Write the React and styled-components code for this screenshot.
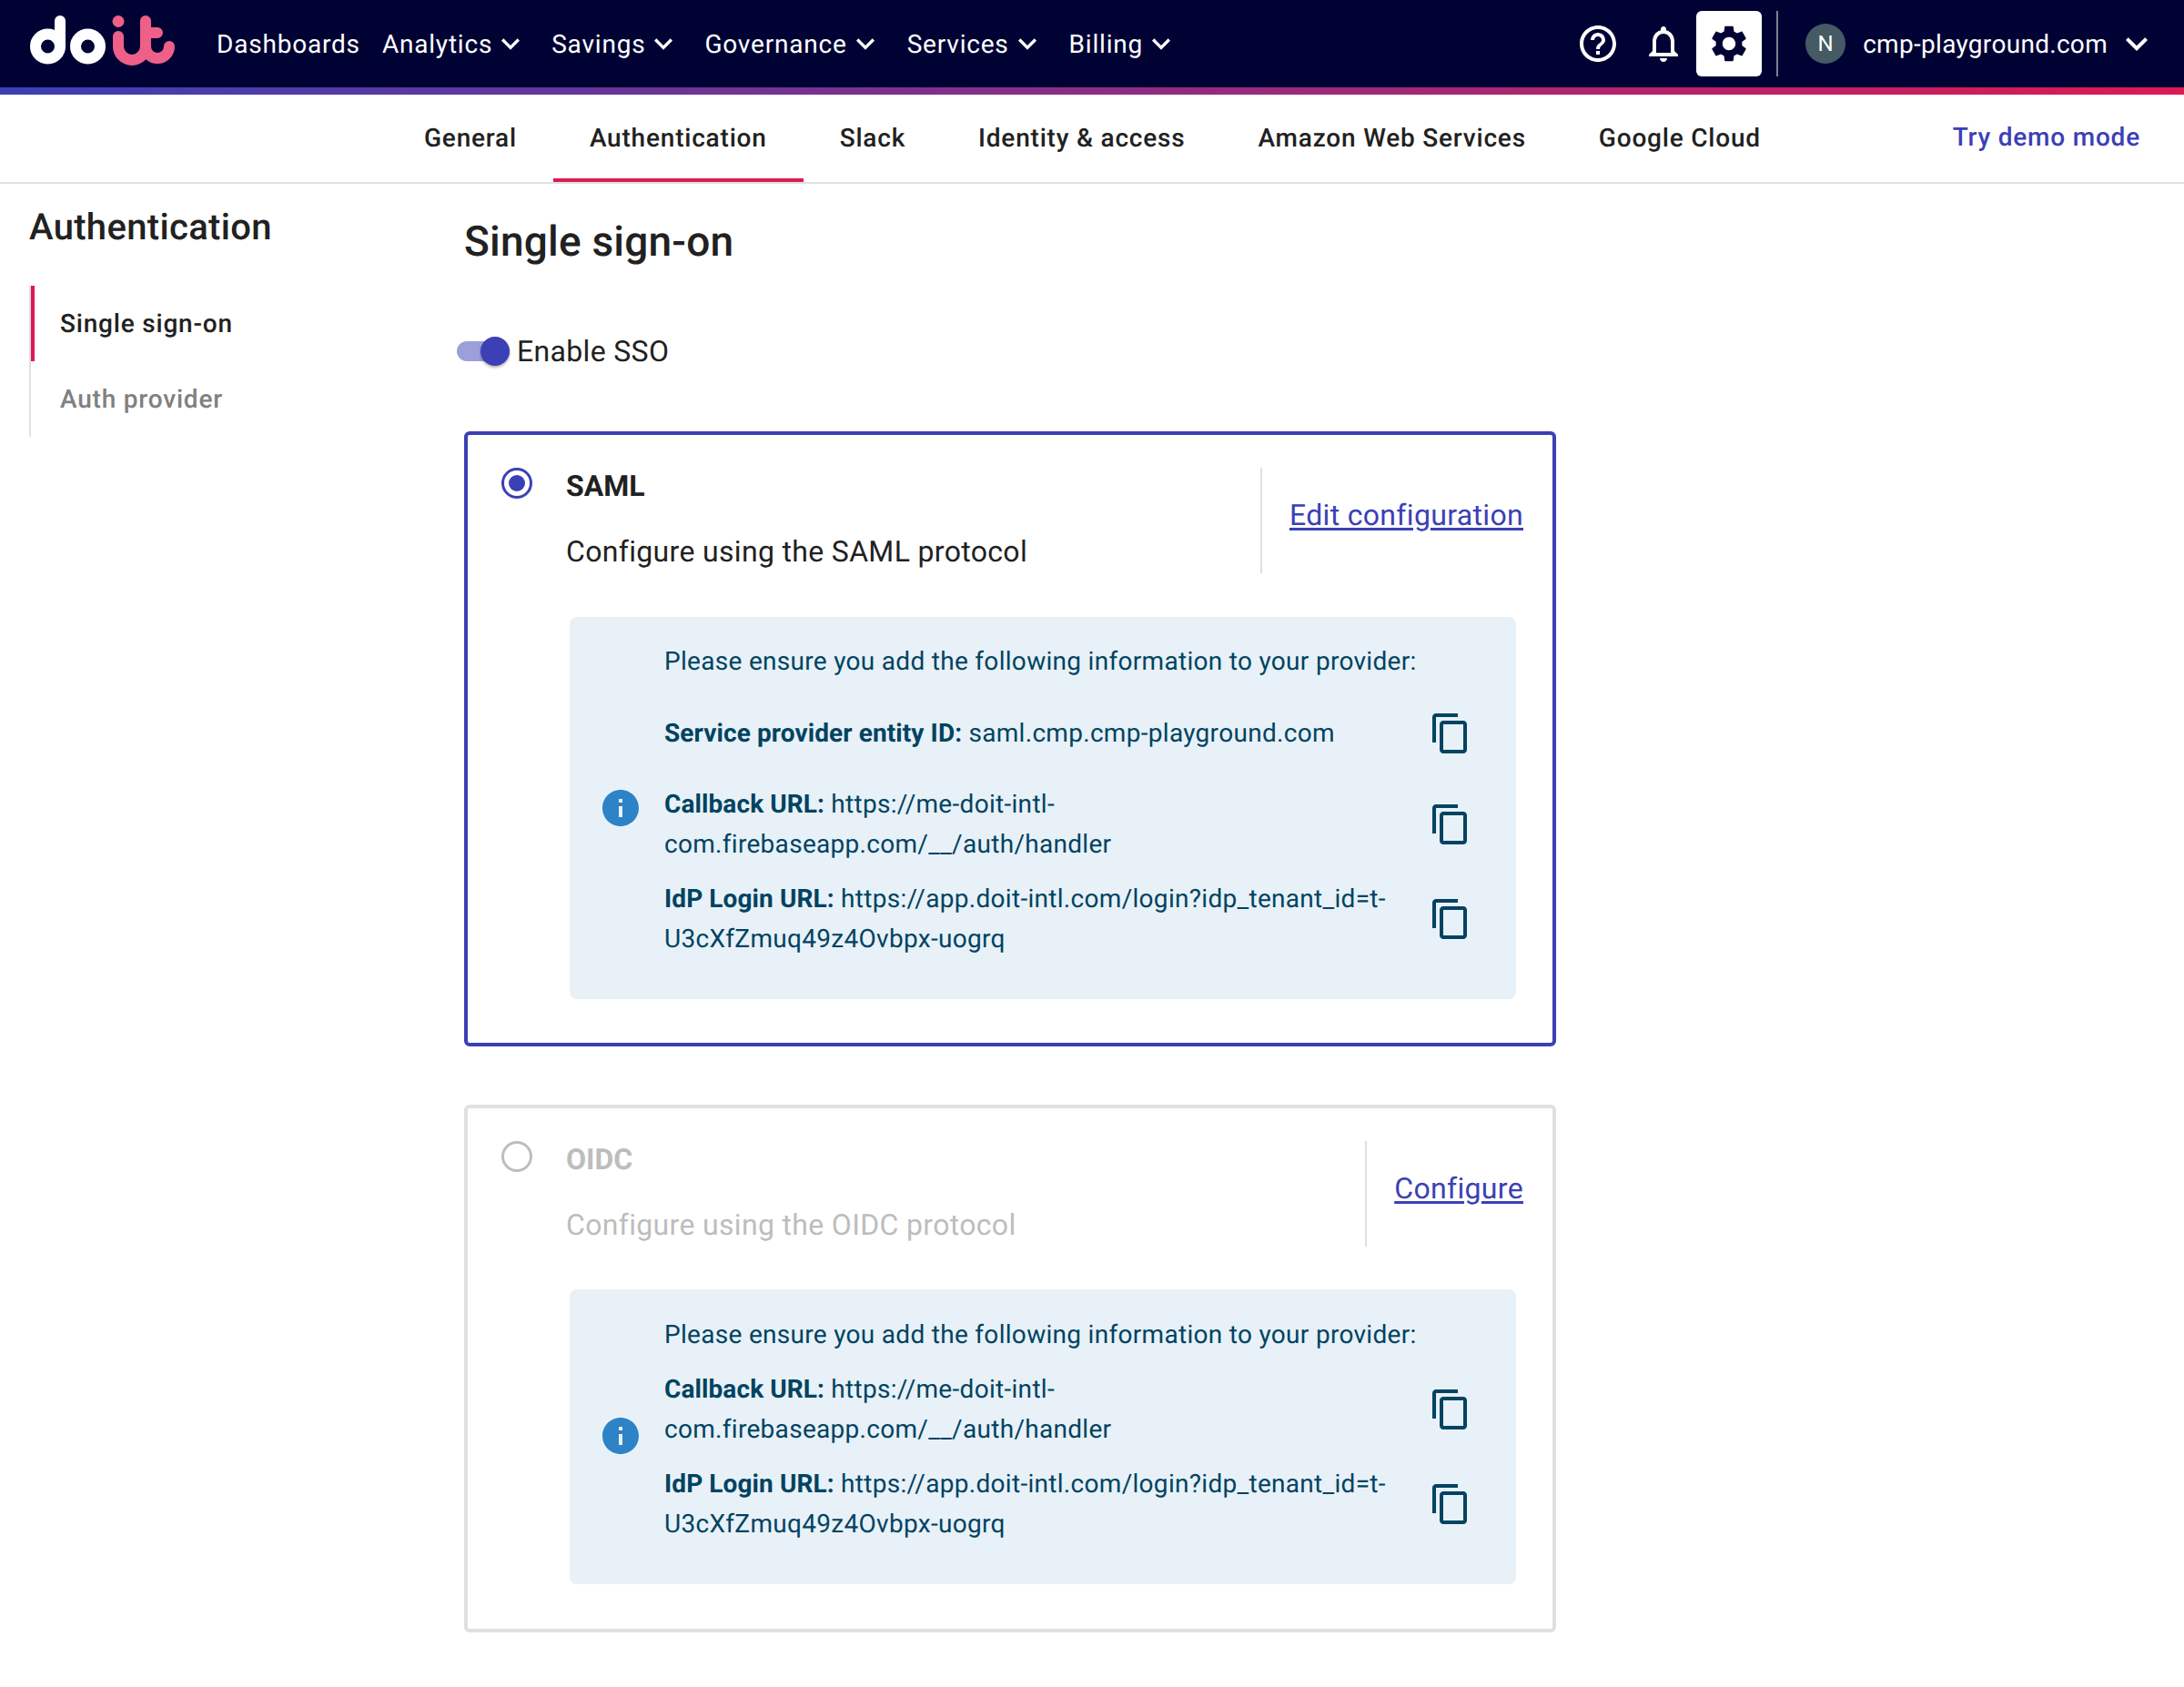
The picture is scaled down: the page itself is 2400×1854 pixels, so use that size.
import React from 'react';
import styled, { createGlobalStyle } from 'styled-components';

const PRIMARY = '#3b40b5';
const RED = '#dc1a54';
const INFO_TEXT = '#014361';

const icons = {
  help: 'M11 18h2v-2h-2v2zm1-16C6.48 2 2 6.48 2 12s4.48 10 10 10 10-4.48 10-10S17.52 2 12 2zm0 18c-4.41 0-8-3.59-8-8s3.59-8 8-8 8 3.59 8 8-3.59 8-8 8zm0-14c-2.21 0-4 1.79-4 4h2c0-1.1.9-2 2-2s2 .9 2 2c0 2-3 1.75-3 5h2c0-2.25 3-2.5 3-5 0-2.21-1.79-4-4-4z',
  bell: 'M12 22c1.1 0 2-.9 2-2h-4c0 1.1.9 2 2 2zm6-6v-5c0-3.07-1.63-5.64-4.5-6.32V4c0-.83-.67-1.5-1.5-1.5s-1.5.67-1.5 1.5v.68C7.64 5.36 6 7.92 6 11v5l-2 2v1h16v-1l-2-2zm-2 1H8v-6c0-2.48 1.51-4.5 4-4.5s4 2.02 4 4.5v6z',
  gear: 'M19.14 12.94c.04-.3.06-.61.06-.94 0-.32-.02-.64-.07-.94l2.03-1.58c.18-.14.23-.41.12-.61l-1.92-3.32c-.12-.22-.37-.29-.59-.22l-2.39.96c-.5-.38-1.03-.7-1.62-.94l-.36-2.54c-.04-.24-.24-.41-.48-.41h-3.84c-.24 0-.43.17-.47.41l-.36 2.54c-.59.24-1.13.57-1.62.94l-2.39-.96c-.22-.08-.47 0-.59.22L2.74 8.87c-.12.21-.08.47.12.61l2.03 1.58c-.05.3-.09.63-.09.94s.02.64.07.94l-2.03 1.58c-.18.14-.23.41-.12.61l1.92 3.32c.12.22.37.29.59.22l2.39-.96c.5.38 1.03.7 1.62.94l.36 2.54c.05.24.24.41.48.41h3.84c.24 0 .44-.17.47-.41l.36-2.54c.59-.24 1.13-.56 1.62-.94l2.39.96c.22.08.47 0 .59-.22l1.92-3.32c.12-.22.07-.47-.12-.61l-2.01-1.58zM12 15.6c-1.98 0-3.6-1.62-3.6-3.6s1.62-3.6 3.6-3.6 3.6 1.62 3.6 3.6-1.62 3.6-3.6 3.6z',
  chevron: 'M16.59 8.59 12 13.17 7.41 8.59 6 10l6 6 6-6z',
  copy: 'M16 1H4c-1.1 0-2 .9-2 2v14h2V3h12V1zm3 4H8c-1.1 0-2 .9-2 2v14c0 1.1.9 2 2 2h11c1.1 0 2-.9 2-2V7c0-1.1-.9-2-2-2zm0 16H8V7h11v14z',
  info: 'M12 2C6.48 2 2 6.48 2 12s4.48 10 10 10 10-4.48 10-10S17.52 2 12 2zm1 15h-2v-6h2v6zm0-8h-2V7h2v2z',
};

const Global = createGlobalStyle`
  html, body { margin: 0; padding: 0; background: #fff; }
  body {
    font-family: Roboto, "Liberation Sans", sans-serif;
    color: #212121;
    text-rendering: geometricPrecision;
  }
  * { box-sizing: border-box; }
`;

const Svg = styled.svg`
  display: block;
  flex: none;
  fill: ${({ $color }) => $color || 'currentColor'};
`;

const Icon = ({ name, size = 48, color }) => (
  <Svg viewBox="0 0 24 24" width={size} height={size} $color={color}>
    <path d={icons[name]} />
  </Svg>
);

const TopBar = styled.header`
  height: 96px;
  background: #000234;
  color: #fff;
  display: flex;
  align-items: center;
  padding: 0 28px 0 24px;
`;

const LogoWrap = styled.div`
  width: 214px;
  flex: none;
`;

const Nav = styled.nav`
  display: flex;
  align-items: center;
  flex: 1;
`;

const NavItem = styled.div`
  display: flex;
  align-items: center;
  font-size: 28px;
  font-weight: 400;
  letter-spacing: 0.8px;
  margin-right: ${({ $gap }) => $gap}px;
  white-space: nowrap;
`;

const TopIcon = styled.div`
  width: 72px;
  height: 72px;
  border-radius: 6px;
  display: flex;
  align-items: center;
  justify-content: center;
  background: ${({ $active }) => ($active ? '#fff' : 'transparent')};
  color: ${({ $active }) => ($active ? '#000234' : '#fff')};
`;

const Sep = styled.div`
  width: 2px;
  height: 72px;
  margin: 0 30px 0 16px;
  background: #7f8090;
`;

const Avatar = styled.div`
  width: 44px;
  height: 44px;
  border-radius: 50%;
  background: #455a64;
  display: flex;
  align-items: center;
  justify-content: center;
  font-size: 24px;
  margin-right: 19px;
`;

const Account = styled.div`
  font-size: 28px;
  letter-spacing: 0.3px;
  margin-right: 8px;
`;

const GradientBar = styled.div`
  height: 8px;
  background: linear-gradient(90deg, ${PRIMARY}, ${RED});
`;

const TabBar = styled.div`
  height: 98px;
  border-bottom: 2px solid #e0e0e0;
  padding: 0 32px 0 426px;
  display: flex;
  align-items: stretch;
`;

const Tab = styled.div`
  display: flex;
  align-items: center;
  padding: 3px 40px 0;
  font-size: 28px;
  font-weight: 500;
  letter-spacing: 0.8px;
  color: #212121;
  border-bottom: 4px solid ${({ $active }) => ($active ? RED : 'transparent')};
  white-space: nowrap;
`;

const DemoLink = styled.div`
  margin-left: auto;
  display: flex;
  align-items: center;
  padding: 0 16px 3px 0;
  font-size: 28px;
  font-weight: 500;
  letter-spacing: 0.8px;
  color: ${PRIMARY};
`;

const Page = styled.div`
  display: flex;
`;

const Side = styled.aside`
  width: 510px;
  flex: none;
  padding: 22px 0 0 32px;
`;

const SideTitle = styled.h2`
  margin: 0 0 38px;
  font-size: 40px;
  font-weight: 500;
  letter-spacing: 0.33px;
  line-height: 52px;
  color: #212121;
`;

const SideList = styled.div`
  border-left: 2px solid #e0e0e0;
`;

const SideItem = styled.div`
  height: 83px;
  display: flex;
  align-items: center;
  padding-left: ${({ $active }) => ($active ? '28px' : '32px')};
  border-left: ${({ $active }) => ($active ? `4px solid ${RED}` : 'none')};
  font-size: 28px;
  font-weight: 500;
  letter-spacing: 0.8px;
  color: ${({ $active }) => ($active ? '#212121' : '#808080')};
`;

const Main = styled.main`
  width: 1200px;
  padding-top: 31px;
`;

const Title = styled.h1`
  margin: 0;
  font-size: 46px;
  font-weight: 500;
  letter-spacing: 0.2px;
  line-height: 66px;
  color: #212121;
`;

const SwitchRow = styled.div`
  display: flex;
  align-items: center;
  margin: 55px 0 0 -8px;
  height: 64px;
`;

const SwitchTrack = styled.div`
  position: relative;
  width: 58px;
  height: 22px;
  border-radius: 11px;
  background: #9d9fda;
  margin-right: 18px;
`;

const SwitchThumb = styled.div`
  position: absolute;
  right: 0;
  top: -5px;
  width: 32px;
  height: 32px;
  border-radius: 50%;
  background: ${PRIMARY};
  box-shadow: 0 2px 3px rgba(0, 0, 0, 0.3);
`;

const SwitchLabel = styled.span`
  font-size: 32px;
  letter-spacing: 0.33px;
  margin-left: -10px;
  color: #212121;
`;

const Card = styled.section`
  border: 4px solid ${({ $active }) => ($active ? PRIMARY : '#e0e0e0')};
  border-radius: 6px;
  padding: 36px 32px ${({ $active }) => ($active ? 48 : 49)}px 32px;
  margin-top: ${({ $active }) => ($active ? 56 : 64)}px;
`;

const CardHead = styled.div`
  display: flex;
  height: 116px;
`;

const Radio = styled.div`
  width: 34px;
  height: 34px;
  margin: 0 0 0 5px;
  flex: none;
  border-radius: 50%;
  border: 3px solid ${({ $on }) => ($on ? PRIMARY : '#bdbdbd')};
  display: flex;
  align-items: center;
  justify-content: center;
  &::after {
    content: '';
    display: ${({ $on }) => ($on ? 'block' : 'none')};
    width: 18px;
    height: 18px;
    border-radius: 50%;
    background: ${PRIMARY};
  }
`;

const HeadText = styled.div`
  flex: 1;
  margin-left: 37px;
`;

const CardTitle = styled.div`
  font-size: 32px;
  font-weight: 700;
  line-height: 40px;
  color: ${({ $off }) => ($off ? '#bdbdbd' : '#212121')};
`;

const CardDesc = styled.div`
  margin-top: 30px;
  font-size: 32px;
  letter-spacing: 0.33px;
  line-height: 44px;
  color: ${({ $off }) => ($off ? '#bdbdbd' : '#212121')};
`;

const HeadAction = styled.div`
  border-left: 2px solid #e0e0e0;
  padding: 0 0 12px 30px;
  display: flex;
  align-items: center;
`;

const ActionLink = styled.a`
  font-size: 32px;
  letter-spacing: 0.33px;
  color: ${PRIMARY};
  text-decoration: underline;
  text-underline-offset: 3px;
`;

const InfoBox = styled.div`
  margin: ${({ $mt }) => $mt}px 8px 0 80px;
  background: #e8f1f8;
  border-radius: 8px;
  padding: ${({ $pt }) => $pt}px 32px ${({ $pb }) => $pb}px 32px;
  display: flex;
  align-items: center;
  color: ${INFO_TEXT};
  font-size: 28px;
  line-height: 44px;
  letter-spacing: 0.3px;
`;

const InfoIcon = styled.div`
  flex: none;
  width: 48px;
  margin: ${({ $mt }) => $mt}px 24px 0 0;
`;

const InfoBody = styled.div`
  flex: 1;
`;

const InfoRow = styled.div`
  display: flex;
  align-items: center;
  margin-top: ${({ $gap }) => $gap}px;
`;

const InfoText = styled.div`
  width: 800px;
  margin-right: 40px;
`;

const Strong = styled.b`
  font-weight: 700;
  letter-spacing: 0.1px;
`;

const Logo = () => (
  <svg width="170" height="60" viewBox="24 20 170 60">
    <g fill="none" strokeWidth="12" strokeLinecap="round">
      <circle cx="52.5" cy="55" r="13.5" stroke="#fff" />
      <path d="M66 27V55" stroke="#fff" />
      <circle cx="96.5" cy="55" r="13.5" stroke="#fff" />
      <path
        d="M130 44V55a15 15 0 0 0 30 0V27M160 40H173M160 55a13 13 0 0 0 26 0"
        stroke="#ee6088"
      />
    </g>
    <circle cx="130" cy="27.5" r="6.5" fill="#ee6088" />
  </svg>
);

const CALLBACK = { label: 'Callback URL:', value: 'https://me-doit-intl-com.firebaseapp.com/__/auth/handler' };
const IDP = { label: 'IdP Login URL:', value: 'https://app.doit-intl.com/login?idp_tenant_id=t-U3cXfZmuq49z4Ovbpx-uogrq' };

const Row = ({ label, value, gap }) => (
  <InfoRow $gap={gap}>
    <InfoText>
      <Strong>{label}</Strong> {value}
    </InfoText>
    <Icon name="copy" color={INFO_TEXT} />
  </InfoRow>
);

const navItems = [
  { label: 'Dashboards', gap: 24 },
  { label: 'Analytics', chevron: true, gap: 25 },
  { label: 'Savings', chevron: true, gap: 25 },
  { label: 'Governance', chevron: true, gap: 26 },
  { label: 'Services', chevron: true, gap: 26 },
  { label: 'Billing', chevron: true, gap: 0 },
];

const tabs = ['General', 'Authentication', 'Slack', 'Identity & access', 'Amazon Web Services', 'Google Cloud'];

export default function App() {
  return (
    <>
      <Global />
      <TopBar>
        <LogoWrap>
          <Logo />
        </LogoWrap>
        <Nav>
          {navItems.map((n) => (
            <NavItem key={n.label} $gap={n.gap}>
              {n.label}
              {n.chevron && <Icon name="chevron" size={40} />}
            </NavItem>
          ))}
        </Nav>
        <TopIcon><Icon name="help" /></TopIcon>
        <TopIcon><Icon name="bell" /></TopIcon>
        <TopIcon $active><Icon name="gear" /></TopIcon>
        <Sep />
        <Avatar>N</Avatar>
        <Account>cmp-playground.com</Account>
        <Icon name="chevron" size={48} />
      </TopBar>
      <GradientBar />
      <TabBar>
        {tabs.map((t) => (
          <Tab key={t} $active={t === 'Authentication'}>{t}</Tab>
        ))}
        <DemoLink>Try demo mode</DemoLink>
      </TabBar>
      <Page>
        <Side>
          <SideTitle>Authentication</SideTitle>
          <SideList>
            <SideItem $active>Single sign-on</SideItem>
            <SideItem>Auth provider</SideItem>
          </SideList>
        </Side>
        <Main>
          <Title>Single sign-on</Title>
          <SwitchRow>
            <SwitchTrack><SwitchThumb /></SwitchTrack>
            <SwitchLabel>Enable SSO</SwitchLabel>
          </SwitchRow>
          <Card $active>
            <CardHead>
              <Radio $on />
              <HeadText>
                <CardTitle>SAML</CardTitle>
                <CardDesc>Configure using the SAML protocol</CardDesc>
              </HeadText>
              <HeadAction>
                <ActionLink>Edit configuration</ActionLink>
              </HeadAction>
            </CardHead>
            <InfoBox $mt={48} $pt={27} $pb={44}>
              <InfoIcon $mt={16}><Icon name="info" color="#2d83c6" /></InfoIcon>
              <InfoBody>
                <div>Please ensure you add the following information to your provider:</div>
                <Row gap={33} label="Service provider entity ID:" value="saml.cmp.cmp-playground.com" />
                <Row gap={32} label={CALLBACK.label} value={CALLBACK.value} />
                <Row gap={16} label={IDP.label} value={IDP.value} />
              </InfoBody>
            </InfoBox>
          </Card>
          <Card>
            <CardHead>
              <Radio />
              <HeadText>
                <CardTitle $off>OIDC</CardTitle>
                <CardDesc $off>Configure using the OIDC protocol</CardDesc>
              </HeadText>
              <HeadAction>
                <ActionLink>Configure</ActionLink>
              </HeadAction>
            </CardHead>
            <InfoBox $mt={47} $pt={28} $pb={44}>
              <InfoIcon $mt={14}><Icon name="info" color="#2d83c6" /></InfoIcon>
              <InfoBody>
                <div>Please ensure you add the following information to your provider:</div>
                <Row gap={16} label={CALLBACK.label} value={CALLBACK.value} />
                <Row gap={16} label={IDP.label} value={IDP.value} />
              </InfoBody>
            </InfoBox>
          </Card>
        </Main>
      </Page>
    </>
  );
}
